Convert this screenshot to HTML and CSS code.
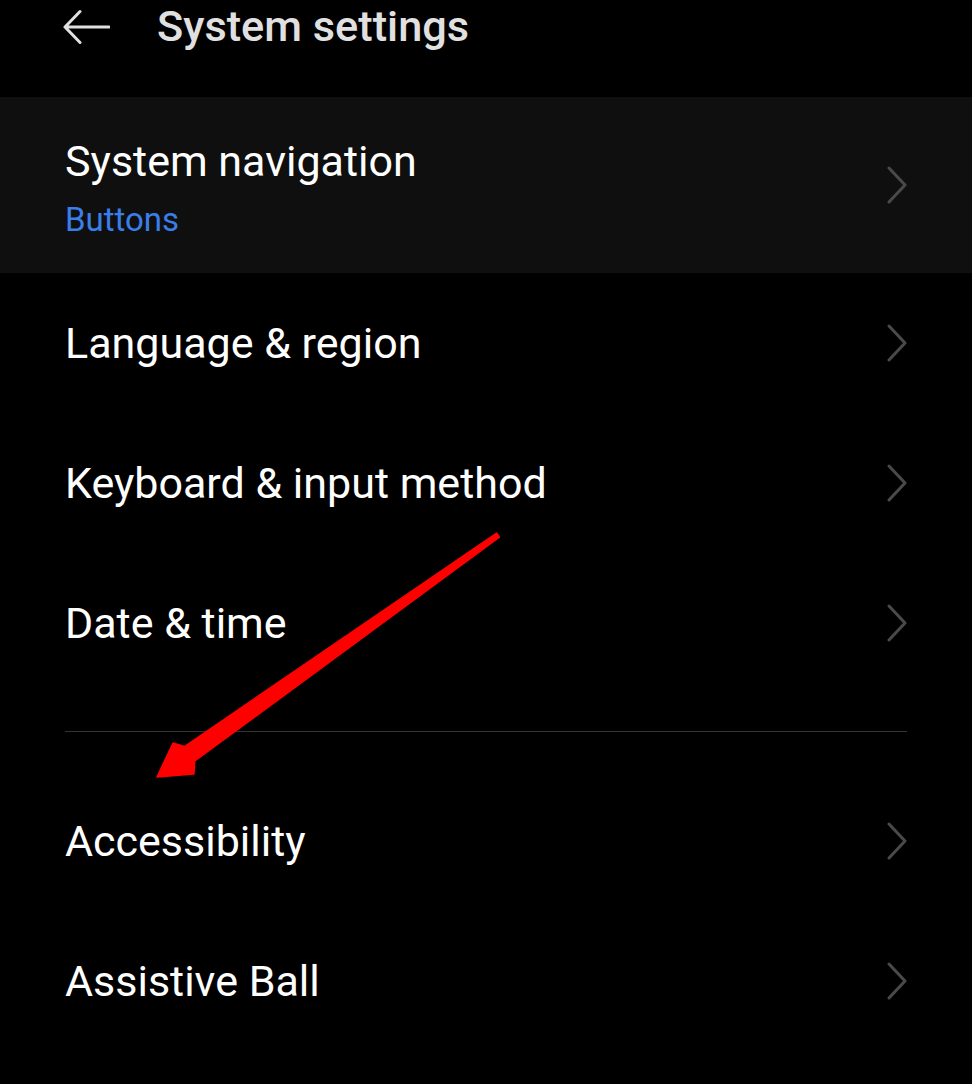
FILE: index.html
```html
<!doctype html>
<html><head>
    <meta charset="utf-8">
    <meta name="viewport" content="width=device-width, initial-scale=1.0">
    <link rel="stylesheet" href="styles.css">
</head>
<body>
    <div class='header'>
        <svg class='back' width='48' height='36' viewBox='0 0 48 36'>
            <path d='M3 18 H47 M18 2.5 L3 18 L18 33.5' fill='none' stroke='#e0e0e0' stroke-width='3' stroke-linecap='round' stroke-linejoin='round'/>
        </svg>
        <div class='page-title'>System settings</div>
    </div>

    <div class='list'>
        <div class='row row-active'>
            <div class='row-text'>
                <div class='title'>System navigation</div>
                <div class='sub'>Buttons</div>
            </div>
            <svg class='chevron' width='20' height='38' viewBox='0 0 20 38'><polyline points='2,2 18,19 2,36' fill='none' stroke='#4a4a4a' stroke-width='3' stroke-linecap='round' stroke-linejoin='round'/></svg>
        </div>
        <div class='row'>
            <div class='title'>Language &amp; region</div>
            <svg class='chevron' width='20' height='38' viewBox='0 0 20 38'><polyline points='2,2 18,19 2,36' fill='none' stroke='#4a4a4a' stroke-width='3' stroke-linecap='round' stroke-linejoin='round'/></svg>
        </div>
        <div class='row'>
            <div class='title'>Keyboard &amp; input method</div>
            <svg class='chevron' width='20' height='38' viewBox='0 0 20 38'><polyline points='2,2 18,19 2,36' fill='none' stroke='#4a4a4a' stroke-width='3' stroke-linecap='round' stroke-linejoin='round'/></svg>
        </div>
        <div class='row'>
            <div class='title'>Date &amp; time</div>
            <svg class='chevron' width='20' height='38' viewBox='0 0 20 38'><polyline points='2,2 18,19 2,36' fill='none' stroke='#4a4a4a' stroke-width='3' stroke-linecap='round' stroke-linejoin='round'/></svg>
        </div>

        <div class='divider'></div>

        <div class='row'>
            <div class='title'>Accessibility</div>
            <svg class='chevron' width='20' height='38' viewBox='0 0 20 38'><polyline points='2,2 18,19 2,36' fill='none' stroke='#4a4a4a' stroke-width='3' stroke-linecap='round' stroke-linejoin='round'/></svg>
        </div>
        <div class='row'>
            <div class='title'>Assistive Ball</div>
            <svg class='chevron' width='20' height='38' viewBox='0 0 20 38'><polyline points='2,2 18,19 2,36' fill='none' stroke='#4a4a4a' stroke-width='3' stroke-linecap='round' stroke-linejoin='round'/></svg>
        </div>
    </div>

    <!-- red annotation arrow drawn over the list -->
    <svg class='annotation' width='972' height='1084' viewBox='0 0 972 1084'>
        <polygon points='496.6,533 499.4,537.2 194.8,761 194,774 157,777 173,743 184.4,746.5' fill='#ff0000' stroke='#ff0000' stroke-width='1.5' stroke-linejoin='round'/>
    </svg>
</body></html>
```

FILE: styles.css
```css
body {
    margin: 0;
    background: #000;
    font-family: Roboto, "Noto Sans", sans-serif;
    color: #fff;
    position: relative;
    overflow: hidden;
}

.header {
    display: flex;
    align-items: center;
    height: 54px;
    padding: 0 0 43px 62px;
}

.back {
    display: block;
}

.page-title {
    margin-left: 47px;
    font-size: 43.3px;
    font-weight: 500;
    color: #e0e0e0;
    line-height: 54px;
}

.row {
    display: flex;
    align-items: center;
    justify-content: space-between;
    height: 140px;
    padding: 0 65px 0 65px;
}

.row-active {
    height: 176px;
    background: #0f0f0f;
}

/* 副标题行整体略微下移 */
.row-text {
    margin-top: 5px;
}

.title {
    font-size: 43px;
    line-height: 50px;
}

.sub {
    margin-top: 14px;
    font-size: 33px;
    line-height: 40px;
    color: #3b7eea;
}

.chevron {
    display: block;
    flex: none;
}

.divider {
    height: 1px;
    margin: 38px 65px 39px 65px;
    background: #333;
}

.annotation {
    position: absolute;
    left: 0;
    top: 0;
    pointer-events: none;
}
```
